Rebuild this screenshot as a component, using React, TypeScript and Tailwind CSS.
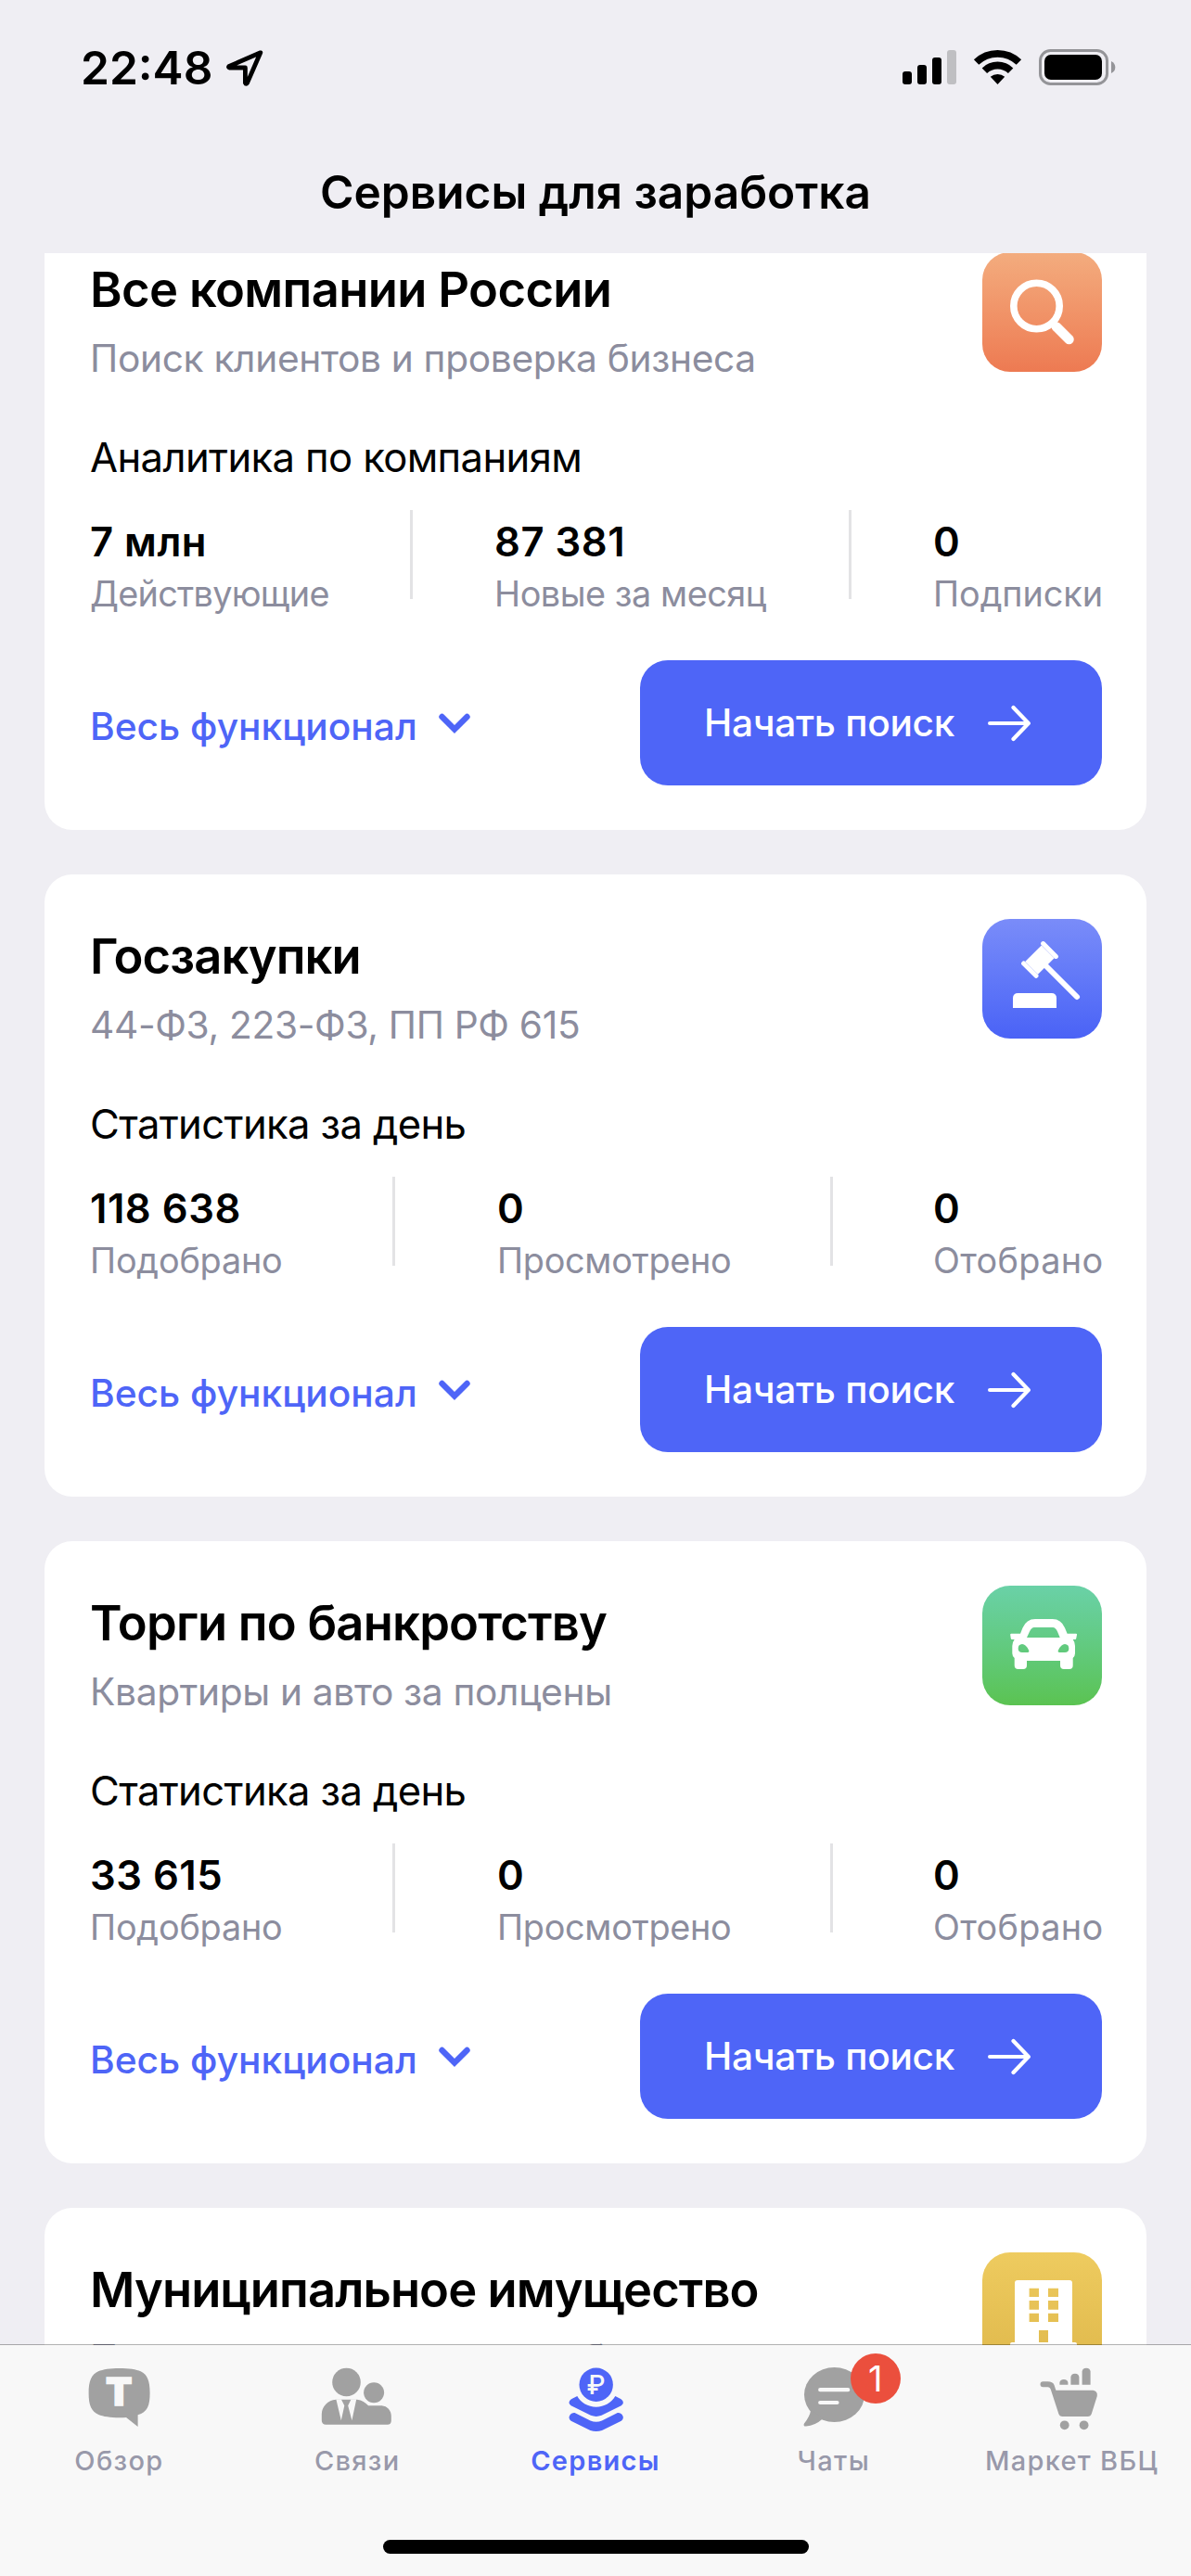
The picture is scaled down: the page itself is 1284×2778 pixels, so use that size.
import type { ReactNode } from "react";

type Stat = { value: string; label: string; spacing: string };

type Service = {
  title: string;
  subtitle: string;
  section?: string;
  stats?: Stat[];
  cols?: string;
  tile: string;
  icon: ReactNode;
  titleSpacing: string;
};

const dayCols = "grid-cols-[327px_112px_360px_110px_1fr]";

const services: Service[] = [
  {
    title: "Все компании России",
    subtitle: "Поиск клиентов и проверка бизнеса",
    section: "Аналитика по компаниям",
    stats: [
      { value: "7 млн", label: "Действующие", spacing: "tracking-[-0.72px]" },
      { value: "87 381", label: "Новые за месяц", spacing: "tracking-[-0.46px]" },
      { value: "0", label: "Подписки", spacing: "tracking-[-0.05px]" },
    ],
    cols: "grid-cols-[346px_90px_383px_90px_1fr]",
    tile: "from-[#f3ac7e] to-[#ed7a52]",
    icon: <SearchIcon />,
    titleSpacing: "tracking-[-0.64px]",
  },
  {
    title: "Госзакупки",
    subtitle: "44-ФЗ, 223-ФЗ, ПП РФ 615",
    section: "Статистика за день",
    stats: [
      { value: "118 638", label: "Подобрано", spacing: "tracking-[-0.19px]" },
      { value: "0", label: "Просмотрено", spacing: "tracking-[-0.29px]" },
      { value: "0", label: "Отобрано", spacing: "tracking-[0.34px]" },
    ],
    cols: dayCols,
    tile: "from-[#7a8cf9] to-[#4a62f6]",
    icon: <GavelIcon />,
    titleSpacing: "tracking-[-0.89px]",
  },
  {
    title: "Торги по банкротству",
    subtitle: "Квартиры и авто за полцены",
    section: "Статистика за день",
    stats: [
      { value: "33 615", label: "Подобрано", spacing: "tracking-[-0.19px]" },
      { value: "0", label: "Просмотрено", spacing: "tracking-[-0.29px]" },
      { value: "0", label: "Отобрано", spacing: "tracking-[0.34px]" },
    ],
    cols: dayCols,
    tile: "from-[#6ad1a7] to-[#5bc351]",
    icon: <CarIcon />,
    titleSpacing: "tracking-[-0.8px]",
  },
  {
    title: "Муниципальное имущество",
    subtitle: "Приватизация и аренда от бюджета",
    tile: "from-[#eecb5f] to-[#dfb84b]",
    icon: <BuildingIcon />,
    titleSpacing: "tracking-[-0.92px]",
  },
];

function SearchIcon() {
  return (
    <svg viewBox="0 0 129 129" className="size-full" fill="none" stroke="#fff" strokeLinecap="round">
      <circle cx="58.5" cy="58" r="24.7" strokeWidth="7.6" />
      <path d="M77 77.5L79 79.5" strokeWidth="8" />
      <path d="M80 80.5L93.5 94" strokeWidth="10.5" />
    </svg>
  );
}

function GavelIcon() {
  return (
    <svg viewBox="0 0 129 129" className="size-full" fill="#fff">
      <path d="M63.8 28.4L77.6 42.2L60 59.8L46.2 46Z" />
      <path
        d="M65.6 26.6L79.4 40.4M44.6 47.9L58 61.3"
        fill="none"
        stroke="#fff"
        strokeWidth="5"
        strokeLinecap="round"
      />
      <path d="M66 48L102 84" fill="none" stroke="#fff" strokeWidth="6" strokeLinecap="round" />
      <path d="M33 96V85.5Q33 80 38.5 80H74.5Q80 80 80 85.5V96Z" />
    </svg>
  );
}

function CarIcon() {
  return (
    <svg viewBox="0 0 129 129" className="size-full" fill="#fff" fillRule="evenodd">
      <path d="M41 51.7L43.5 45.5Q47.5 36 57 36H75.7Q85 36 89 45.5L91.6 51.7H101Q102.3 51.7 102 53L101.2 57Q101 58 100 58H97.7Q100 61 100 65V73Q100 76 97.7 78V86Q97.7 90 93.7 90H88Q84 90 84 86V81H48V86Q48 90 44 90H38.7Q34.7 90 34.7 86V78Q32.3 76 32.3 73V65Q32.3 61 34.7 58H32Q31 58 30.8 57L30.2 53Q30 51.7 31.3 51.7ZM48 56H83.7L81 49.5Q79 45 76 45H56Q53 45 51 49.5ZM43 63Q38.7 63.3 38.7 67.8Q38.7 72 43 72H48.5Q51.3 72 50 69.5Q47 63 43 63ZM89 63Q93.3 63.3 93.3 67.8Q93.3 72 89 72H83.5Q80.7 72 82 69.5Q85 63 89 63Z" />
    </svg>
  );
}

function BuildingIcon() {
  return (
    <svg viewBox="0 0 129 129" className="size-full" fill="#fff" fillRule="evenodd">
      <path d="M38 30H94Q97 30 97 33V97H100Q102 97 102 99V104H30V99Q30 97 32 97H35V33Q35 30 38 30ZM50.6 38.7V48H61V38.7ZM71 38.7V48H82V38.7ZM50.6 52V61.7H61V52ZM71 52V61.7H82V52ZM50.6 65.7V75H61V65.7ZM71 65.7V75H82V65.7ZM61 84V97H71V84Z" />
    </svg>
  );
}

function StatBlock({ value, label, spacing }: Stat) {
  return (
    <div className="whitespace-nowrap pl-px pt-2">
      <p className="text-[43.6px] font-semibold leading-[54px] tracking-[0.5px]">{value}</p>
      <p className={`mt-[5px] text-[37.8px] leading-[46px] text-[#8c8d9e] ${spacing}`}>{label}</p>
    </div>
  );
}

function Divider() {
  return <div className="h-24 w-[3px] bg-[#e3e3e5]" />;
}

function Stats({ stats, cols }: { stats: Stat[]; cols?: string }) {
  const [first, second, third] = stats;
  return (
    <div className={`mt-[29px] grid ${cols}`}>
      <StatBlock {...first} />
      <Divider />
      <StatBlock {...second} />
      <Divider />
      <StatBlock {...third} />
    </div>
  );
}

function CardActions() {
  return (
    <div className="mt-auto flex items-center justify-between">
      <button type="button" className="flex items-center gap-[23px] pl-px text-[#4e65f7]">
        <span className="pt-[9px] text-[40.7px] font-medium leading-[50px]">Весь функционал</span>
        <svg width="34" height="24" viewBox="0 0 34 24" fill="none">
          <path d="M3.5 5L17 18.5L30.5 5" stroke="currentColor" strokeWidth="6.4" strokeLinecap="round" />
        </svg>
      </button>
      <button
        type="button"
        className="flex h-[135px] w-[498px] items-center rounded-[30px] bg-[#4e65f7] pl-[69px] text-white"
      >
        <span className="w-[306px] text-left text-[40.7px] font-medium leading-[50px] tracking-[-0.31px]">
          Начать поиск
        </span>
        <svg
          width="46"
          height="40"
          viewBox="0 0 46 40"
          fill="none"
          stroke="currentColor"
          strokeWidth="4.2"
          strokeLinecap="round"
          strokeLinejoin="round"
        >
          <path d="M2.1 20H43.5M27.5 3L43.8 20L27.5 37" />
        </svg>
      </button>
    </div>
  );
}

function ServiceCard({ service }: { service: Service }) {
  return (
    <section className="flex h-[671px] shrink-0 flex-col rounded-[30px] bg-white p-12">
      <div className="flex h-[146px] items-start justify-between">
        <div className="whitespace-nowrap pl-px pt-2">
          <h2 className={`text-[52.5px] font-semibold leading-[64px] ${service.titleSpacing}`}>{service.title}</h2>
          <p className="mt-[18px] text-[40.7px] leading-[50px] tracking-[-0.34px] text-[#8c8d9e]">
            {service.subtitle}
          </p>
        </div>
        <div className={`size-[129px] overflow-hidden rounded-[30px] bg-linear-to-b ${service.tile}`}>
          {service.icon}
        </div>
      </div>
      {service.section && (
        <h3 className="mt-[49px] pl-px text-[43.6px] leading-[54px] tracking-[-0.63px]">{service.section}</h3>
      )}
      {service.stats && (
        <>
          <Stats stats={service.stats} cols={service.cols} />
          <CardActions />
        </>
      )}
    </section>
  );
}

function StatusBar() {
  return (
    <div className="flex h-[145px] items-center justify-between pl-[87px] pr-[81px]">
      <div className="flex items-center gap-[14px]">
        <span className="text-[49.6px] font-semibold leading-[60px]">22:48</span>
        <svg width="42" height="42" viewBox="242 52 42 42" fill="none">
          <path
            d="M279.8 56.8L246 71.4Q244.8 72.8 246.4 73H263.4V89.4Q264.2 91.4 265.6 89.4Z"
            stroke="#000"
            strokeWidth="4.8"
            strokeLinejoin="round"
          />
        </svg>
      </div>
      <svg width="231" height="45" viewBox="972 50 231 45">
        <rect x="973" y="77" width="10" height="14" rx="3" />
        <rect x="989" y="70" width="10" height="21" rx="3" />
        <rect x="1005" y="62" width="10" height="29" rx="3" />
        <rect x="1021" y="54" width="10" height="37" rx="3" fill="#bfbfc2" />
        <g fill="none" stroke="#000" strokeWidth="7.8">
          <path d="M1052.6 67A33.1 33.1 0 0 1 1098.4 67" />
          <path d="M1061.4 76.2A20.3 20.3 0 0 1 1089.6 76.2" />
        </g>
        <path d="M1075.5 91L1067.8 82.8A11.7 11.7 0 0 1 1083.2 82.8Z" />
        <rect x="1121.5" y="54.5" width="72" height="36" rx="11" fill="none" stroke="#949498" strokeWidth="3" />
        <rect x="1126" y="59" width="62" height="27" rx="7" />
        <path d="M1198 66Q1202.3 68 1202.3 72.5T1198 79Z" fill="#949498" />
      </svg>
    </div>
  );
}

const tabs = [
  {
    label: "Обзор",
    icon: (
      <>
        <path
          d="M45.6 6C56 6 64 7.2 68.6 9.3C76 12.8 78.6 20 78.6 32.5C78.6 46 76 53.5 65.6 56.3V69L53 59Q50 59.2 45.6 59.2C36 59.2 28 58 23.3 56C15.5 52.5 12.6 46 12.6 32.5C12.6 20 15.5 12.8 23 9.3C28 7.2 36 6 45.6 6Z"
          fill="currentColor"
        />
        <text
          x="45.2"
          y="46.4"
          textAnchor="middle"
          fontSize="41.5"
          fontWeight="900"
          fill="#f8f8f8"
          stroke="#f8f8f8"
          strokeWidth="1.4"
        >
          T
        </text>
      </>
    ),
  },
  {
    label: "Связи",
    icon: (
      <>
        <g fill="currentColor">
          <circle cx="33.5" cy="21" r="15.3" />
          <circle cx="63.1" cy="32.3" r="11" />
          <path d="M22.1 39.8H45C50 40.3 54 43 57.1 46.3H71.5C77.5 46.8 81.8 51.5 81.8 57.5V62.5Q81.8 66.7 77.6 66.7H11.5Q6.8 66.7 6.8 62V55.5C7 47 13.5 40.5 22.1 39.8Z" />
        </g>
        <path
          d="M22.4 39.5H27.9L31.3 46.3L27.8 62.3ZM44.2 39.5H38.5L35.2 46.3L39.4 62.3Z"
          fill="#f8f8f8"
        />
      </>
    ),
  },
  {
    label: "Сервисы",
    active: true,
    icon: (
      <>
        <g fill="currentColor">
          <circle cx="45.7" cy="23.7" r="18.2" />
          <path d="M25.3 36C29 43 37 47.7 45.7 47.7S62.4 43 66.3 36L72.5 39.2Q77.2 43 72.8 46.2L51.5 56.8Q45.7 59 39.9 56.8L18.6 46.2Q14.2 43 18.9 39.2Z" />
          <path d="M22.6 54L39.5 62.5Q45.7 65 51.9 62.5L68.8 54Q71.5 53.5 73.5 55.8Q76.5 60 72.8 62.8L52 73Q45.7 75.2 39.4 73L18.6 62.8Q14.9 60 17.9 55.8Q20 53.5 22.6 54Z" />
        </g>
        <text x="45.6" y="34.2" textAnchor="middle" fontSize="28" fontWeight="500" fill="#f8f8f8">
          ₽
        </text>
      </>
    ),
  },
  {
    label: "Чаты",
    badge: "1",
    icon: (
      <>
        <g fill="currentColor">
          <ellipse cx="45.5" cy="34.5" rx="32.5" ry="29.5" />
          <path d="M20.2 51Q19 58 13 65.5Q11.5 68.8 15 68.6Q24.5 68 33.5 60Z" />
        </g>
        <path
          d="M30.2 29.2H60.2M30.2 43H48.5"
          fill="none"
          stroke="#f8f8f8"
          strokeWidth="4.2"
          strokeLinecap="round"
        />
      </>
    ),
  },
  {
    label: "Маркет ВБЦ",
    icon: (
      <g fill="currentColor">
        <path d="M13.5 20.3H18.5Q24 20.3 25.5 24L27.4 29.7H67.5Q72.5 30.5 71.8 36L65.8 55Q64.8 58 61.7 58H34.5Q31.2 58 30.3 55L22 29.5Q21 26.3 18.5 26.3H13.5Q10.5 26.3 10.5 23.3T13.5 20.3Z" />
        <path d="M31.4 23.7V21.5Q31.7 18 35.9 18T40.4 21.5V23.7Z" />
        <path d="M43.4 23.7V15.5Q43.7 11.7 47.9 11.7T52.4 15.5V23.7Z" />
        <path d="M55.6 23.7V9.5Q55.9 5.7 60.1 5.7T64.6 9.5V23.7Z" />
        <circle cx="36.7" cy="67.3" r="4.9" />
        <circle cx="57.6" cy="67.3" r="4.9" />
      </g>
    ),
  },
];

function TabBar() {
  return (
    <nav className="relative -mt-px h-[250px] border-t border-black/30 bg-[#f8f8f8] bg-clip-padding pt-[19px]">
      <div className="grid grid-cols-5">
        {tabs.map((tab) => (
          <div
            key={tab.label}
            className={`flex flex-col items-center ${tab.active ? "text-[#4e65f7]" : "text-[#a1a1a1]"}`}
          >
            <div className="relative h-[78px] w-[90px]">
              <svg width="90" height="78" viewBox="0 0 90 78">
                {tab.icon}
              </svg>
              {tab.badge && (
                <span className="absolute -top-[10px] left-[63px] flex size-[54px] items-center justify-center rounded-full bg-[#eb4f3d] text-[38px] leading-none text-white">
                  {tab.badge}
                </span>
              )}
            </div>
            <span
              className={`mt-[10px] whitespace-nowrap text-[29px] leading-9 tracking-[1.3px] ${
                tab.active ? "font-semibold" : "font-medium text-[#9899aa]"
              }`}
            >
              {tab.label}
            </span>
          </div>
        ))}
      </div>
      <div className="mx-auto mt-[67px] h-[15px] w-[459px] rounded-full bg-black" />
    </nav>
  );
}

export default function App() {
  return (
    <div className="flex h-[2778px] w-[1284px] flex-col overflow-hidden bg-[#efeef3] font-['Inter','Noto_Sans',sans-serif] text-black">
      <header className="h-[273px] shrink-0">
        <StatusBar />
        <h1 className="mt-8 text-center text-[49.6px] font-semibold leading-[60px]">Сервисы для заработка</h1>
      </header>
      <main className="h-[2256px] shrink-0 overflow-hidden px-12">
        <div className="-mt-[49px] flex flex-col gap-12">
          {services.map((service) => (
            <ServiceCard key={service.title} service={service} />
          ))}
        </div>
      </main>
      <TabBar />
    </div>
  );
}
